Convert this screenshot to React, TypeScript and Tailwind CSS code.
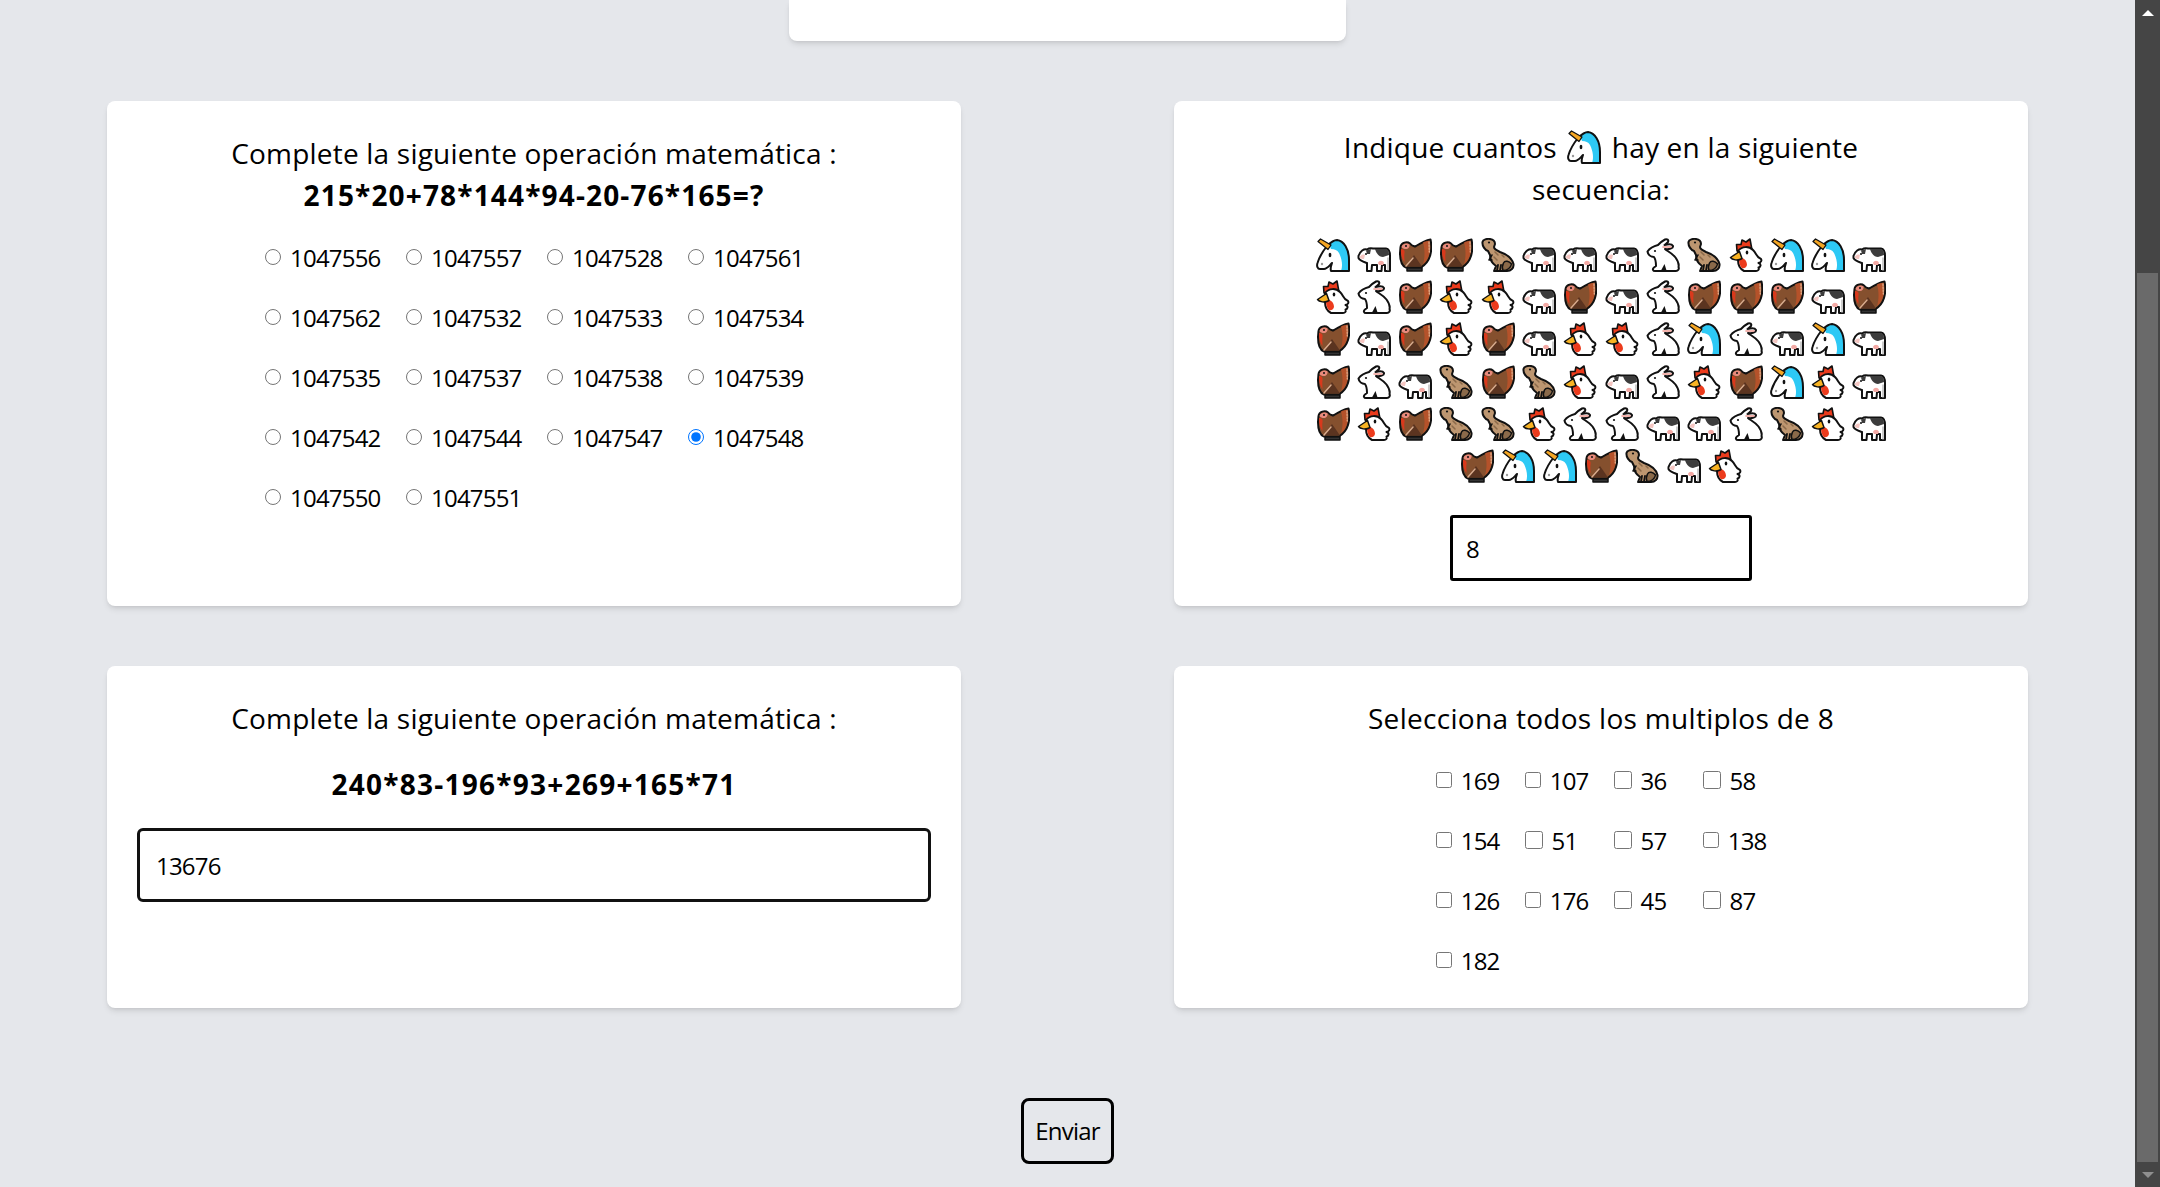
import React from "react";

const K = "#111";

function Unicorn({ className = "h-[34px] w-[34px]" }: { className?: string }) {
  return (
    <svg viewBox="0 0 34 34" className={className} strokeLinejoin="round" strokeLinecap="round">
      <path d="M11 8C15 4 18 2 21 2C28 3 33 11 33 22V33H15C14 30 15 28 16 25C13 28 11 31 8 31H4C1.500 31 0.500 28 1.500 25C3 20 7 13 11 8Z" fill="#fff" />
      <path d="M21 2C28 3 33 11 33 22V33H25C27 28 26 21 23 15C21 12 19 11 15 11L13 6C15 4 18 2 21 2Z" fill="#2dc9f5" />
      <path d="M11 8C15 4 18 2 21 2C28 3 33 11 33 22V33H15C14 30 15 28 16 25C13 28 11 31 8 31H4C1.500 31 0.500 28 1.500 25C3 20 7 13 11 8Z" fill="none" stroke={K} strokeWidth="2" />
      <path d="M2 3.500L4.500 1L15 7L12 11.500Z" fill="#f5a623" stroke={K} strokeWidth="1.300" />
      <ellipse cx="14" cy="17" rx="1.400" ry="2.300" fill={K} />
      <circle cx="6" cy="26" r="1.200" fill="#9a9a9a" />
    </svg>
  );
}

function Cow() {
  return (
    <svg viewBox="0 0 34 34" className="h-[34px] w-[34px]" strokeLinejoin="round" strokeLinecap="round">
      <path d="M1.500 18C3 13 7 10.500 10 11.500C12 10 14 10 16 10.500H29C32 11 33 14 33 18V33H28V27H25L24.500 33H20V27H15L14.500 33H10V25C7 24 3 23 1.500 20Z" fill="#fff" stroke={K} strokeWidth="2" />
      <path d="M18 11H29C31.500 11.500 32 14 32 17L26 19C22 19 19 15 18 11Z" fill="#3c3c3c" />
      <path d="M9 12.500L14 11L13 16L10 16Z" fill="#3c3c3c" />
      <path d="M2.500 19C4 17 6 16 8 17L7 21C5 21 4 21 2.500 19Z" fill="#f5c6c2" />
      <path d="M21 25C22 22 26 22 27 25L26 27H22Z" fill="#f3a9a4" />
      <circle cx="9" cy="16" r="1" fill={K} />
      <path d="M31 20V32" stroke="#bdbdbd" strokeWidth="1.500" />
    </svg>
  );
}

function Turkey() {
  return (
    <svg viewBox="0 0 34 34" className="h-[34px] w-[34px]" strokeLinejoin="round" strokeLinecap="round">
      <path d="M9 29.500H24V33H9Z" fill="#333" stroke={K} strokeWidth="1.500" />
      <path d="M2.500 9C3 4.500 9 3 12 5.500C14 8 16 9 18 8C22 5.500 27 2.500 32.500 1.500C33.500 6 33.500 13 32 18C30.500 23 27 27 23 29.500H8C4 28 2 22 2 15Z" fill="#85502e" stroke={K} strokeWidth="2" />
      <path d="M25 4.500C27 3.500 29 3 31.500 2.500C32.500 7 32.500 13 31 17C30 20 28 24 25 26C27 20 27 11 25 4.500Z" fill="#b5522a" />
      <path d="M31 4L31.300 14" stroke="#e0b08f" strokeWidth="1.300" strokeDasharray="1.500 1.500" />
      <path d="M7 28.500L16 17L24 28.500Z" fill="#5b3420" />
      <path d="M8 28L15 20" stroke="#d9ac8d" strokeWidth="1.500" />
      <path d="M3.500 9C4 6 9 4.500 11.500 6.500C12 9 10 11 8 11C6 11 4.500 10.500 3.500 9Z" fill="#e98a7c" />
      <path d="M3 11C5.500 11 7 12 6.500 15C6 18 6.500 21 6.500 24C4 21 2.500 16 3 11Z" fill="#d9391c" />
      <circle cx="8" cy="8" r="1" fill={K} />
    </svg>
  );
}

function Dino() {
  return (
    <svg viewBox="0 0 34 34" className="h-[34px] w-[34px]" strokeLinejoin="round" strokeLinecap="round">
      <path d="M1.500 4C2 1.500 6 0.500 9 1C12 1.500 14 3 14 6L13 9C13 11 15 12 19 14C25 16 31 20 32.500 26C33 30 30 33 26 33H13L15 28C12 26 9 22 9 17L7 13C4 12 1 8 1.500 4Z" fill="#bd9670" stroke={K} strokeWidth="2" />
      <path d="M22 32.500C26 32.500 30 30 30.500 26C28 23 24 22 22.500 25C21 28 21 30 22 32.500Z" fill="#8b6a4a" stroke={K} strokeWidth="1.500" />
      <path d="M16 32.500L17 27M19 32.500L20 27" stroke={K} strokeWidth="1.800" />
      <path d="M11 17L8 22L11 22" fill="none" stroke={K} strokeWidth="1.500" />
      <path d="M14 14L17 17M13 19L16 22M21 17L23 19" stroke="#8b6a4a" strokeWidth="1.500" />
      <circle cx="8" cy="4.500" r="1.100" fill={K} />
    </svg>
  );
}

function Rabbit() {
  return (
    <svg viewBox="0 0 34 34" className="h-[34px] w-[34px]" strokeLinejoin="round" strokeLinecap="round">
      <path d="M19 1.500C21 0.500 23 2 22 4C21 5 20 6 18.500 7C22 6 26 6 27 8C27.500 10.500 23 11.500 19 11C21 13 26 15 29.500 19.500C32 23 33 27 32.500 29C33.500 31 32 33 30 33H9C7 33 6 31 8 29.500L10 28C10 24 9.500 21 8 19C5 19 2 17 1.500 13.500C4 10 8 8 12 7C14 5 16 3 19 1.500Z" fill="#fff" stroke={K} strokeWidth="2" />
      <path d="M17 9H25" stroke="#f09a93" strokeWidth="1.600" />
      <path d="M15 32.500L18.500 26L20.500 32.500Z" fill={K} />
      <circle cx="9" cy="13" r="1.100" fill={K} />
    </svg>
  );
}

function Rooster() {
  return (
    <svg viewBox="0 0 34 34" className="h-[34px] w-[34px]" strokeLinejoin="round" strokeLinecap="round">
      <path d="M8 13L7.500 6.500L12 6.500L13 2L17 4L21 1L23 12Z" fill="#ec3b1c" stroke={K} strokeWidth="1.600" />
      <path d="M9 13C13 8 20 8 24 12C27 15 28 19 30.500 20C33 21 33 23 31 24.500L29.500 25C32.500 26 32 29 29.500 29.500C30.500 31.500 29 33 27 33H15C11 31 9 27 9 22Z" fill="#fff" stroke={K} strokeWidth="2" />
      <path d="M10 20C14 19 18 22 18 27C17 31 13 31 12 29C10 26 10 23 10 20Z" fill="#ec3b1c" />
      <path d="M10.500 13.500L1.500 19.500C3 22 9 23 13 20.500Z" fill="#f8b323" stroke={K} strokeWidth="1.500" />
      <ellipse cx="18" cy="14.500" rx="1.300" ry="2" fill={K} />
    </svg>
  );
}

const ANIMALS: Record<string, () => React.ReactElement> = {
  U: () => <Unicorn />,
  C: Cow,
  T: Turkey,
  D: Dino,
  R: Rabbit,
  H: Rooster,
};

const SEQUENCE = "UCTTDCCCRDHUUC" + "HRTHHCTCRTTTCT" + "TCTHTCHHRURCUC" + "TRCDTDHCRHTUHC" + "THTDDHRRCCRDHC" + "TUUTDCH";

const RADIOS = [
  "1047556", "1047557", "1047528", "1047561",
  "1047562", "1047532", "1047533", "1047534",
  "1047535", "1047537", "1047538", "1047539",
  "1047542", "1047544", "1047547", "1047548",
  "1047550", "1047551",
];

const CHECKS = ["169", "107", "36", "58", "154", "51", "57", "138", "126", "176", "45", "87", "182"];

function Card({ children }: { children: React.ReactNode }) {
  return <div className="rounded-lg bg-white px-[30px] text-center shadow-md">{children}</div>;
}

export default function App() {
  return (
    <div className="flex h-screen overflow-hidden bg-[#e5e7eb] font-['Open_Sans',sans-serif] text-[24px] leading-[32px] tracking-[-0.8px] text-black">
      <main className="min-w-0 flex-1">
        <div className="mx-auto h-[41px] w-[557px] rounded-b-lg bg-white shadow-md" />

        <div className="mt-[60px] grid grid-cols-2 gap-x-[213px] gap-y-[60px] px-[107px]">
          <Card>
            <div className="h-[505px] pt-[31px]">
              <h2 className="text-[28px] leading-[42px] tracking-[0.2px]">Complete la siguiente operación matemática :</h2>
              <p className="text-[28px] font-bold leading-[42px] tracking-[1.150px]">215*20+78*144*94-20-76*165=?</p>
              <div className="mx-auto mt-[26px] grid w-fit grid-cols-[repeat(4,116px)] gap-x-[25px] text-left">
                {RADIOS.map((value) => (
                  <label key={value} className="flex h-[60px] items-start gap-[9px]">
                    <input type="radio" name="op1" readOnly checked={value === "1047548"} className="mt-[6px] h-[18px] w-[18px]" />
                    <span className="leading-[32px]">{value}</span>
                  </label>
                ))}
              </div>
            </div>
          </Card>

          <Card>
            <div className="flex h-[505px] flex-col items-center pt-[25px]">
              <h2 className="w-[560px] text-[28px] leading-[42px] tracking-[0.2px]">
                Indique cuantos <Unicorn className="mx-[3px] inline-block h-[34px] w-[34px] align-[-6px]" /> hay en la siguiente secuencia:
              </h2>
              <div className="mt-[28px] flex w-[580px] flex-wrap justify-center">
                {SEQUENCE.split("").map((letter, i) => {
                  const Animal = ANIMALS[letter];
                  return (
                    <span key={i} className="flex h-[42.200px] w-[41.300px] items-start justify-center">
                      <Animal />
                    </span>
                  );
                })}
              </div>
              <input readOnly value="8" className="mt-[24px] h-[66px] w-[302px] rounded-[3px] border-[3px] border-black bg-white px-[13px] outline-none" />
            </div>
          </Card>

          <Card>
            <div className="h-[342px] pt-[31px]">
              <h2 className="text-[28px] leading-[42px] tracking-[0.2px]">Complete la siguiente operación matemática :</h2>
              <p className="mt-[24px] text-[28px] font-bold leading-[42px] tracking-[1.250px]">240*83-196*93+269+165*71</p>
              <input readOnly value="13676" className="mt-[23px] block h-[74px] w-full rounded-[6px] border-[3px] border-[#111] bg-white px-[16px] outline-none" />
            </div>
          </Card>

          <Card>
            <div className="h-[342px] pt-[31px]">
              <h2 className="text-[28px] leading-[42px] tracking-[0.3px]">Selecciona todos los multiplos de 8</h2>
              <div className="mx-auto mt-[26px] grid w-fit grid-cols-[repeat(4,64px)] gap-x-[25px] text-left">
                {CHECKS.map((value) => (
                  <label key={value} className="flex h-[60px] items-start gap-[9px]">
                    <input type="checkbox" readOnly className="mt-[6px] h-[18px] w-[18px]" />
                    <span className="leading-[32px]">{value}</span>
                  </label>
                ))}
              </div>
            </div>
          </Card>
        </div>

        <div className="mt-[90px] flex justify-center">
          <button className="h-[66px] w-[93px] rounded-lg border-[3px] border-black">Enviar</button>
        </div>
      </main>

      <aside className="flex h-full w-[25px] shrink-0 flex-col items-center bg-[#454545]">
        <div className="flex h-[25px] shrink-0 items-center justify-center">
          <div className="h-0 w-0 border-x-[6px] border-b-[6px] border-x-transparent border-b-white" />
        </div>
        <div className="h-[248px] shrink-0" />
        <div className="w-[21px] flex-1 bg-[#6a6a6a]" />
        <div className="flex h-[25px] shrink-0 items-center justify-center">
          <div className="h-0 w-0 border-x-[6px] border-t-[6px] border-x-transparent border-t-[#8f8f8f]" />
        </div>
      </aside>
    </div>
  );
}
